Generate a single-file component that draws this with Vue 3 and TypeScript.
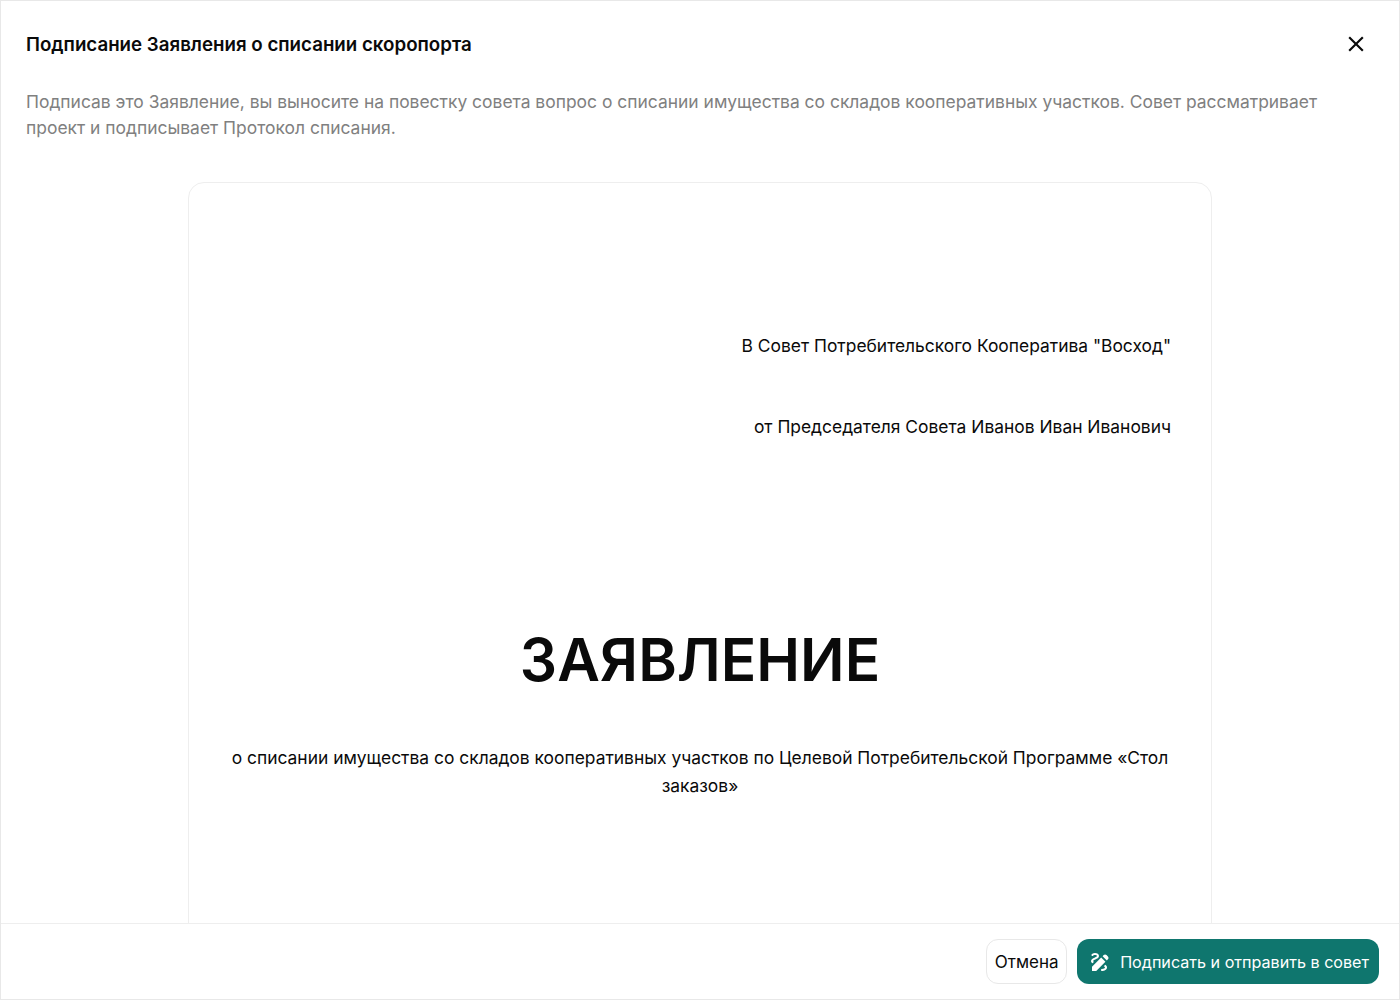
<script setup lang="ts">
const title = 'Подписание Заявления о списании скоропорта'
const intro = 'Подписав это Заявление, вы выносите на повестку совета вопрос о списании имущества со складов кооперативных участков. Совет рассматривает проект и подписывает Протокол списания.'
</script>

<template>
  <div class="dialog">
    <header class="head">
      <h1 class="title">{{ title }}</h1>
      <button class="close" aria-label="Закрыть">
        <svg width="26" height="26" viewBox="0 0 24 24" fill="#0a0a0a">
          <path d="M19 6.41 17.59 5 12 10.59 6.41 5 5 6.41 10.59 12 5 17.59 6.41 19 12 13.41 17.59 19 19 17.59 13.41 12z" />
        </svg>
      </button>
    </header>
    <main class="body">
      <p class="intro">{{ intro }}</p>
      <article class="paper">
        <p class="to">В Совет Потребительского Кооператива "Восход"</p>
        <p class="from">от Председателя Совета Иванов Иван Иванович</p>
        <h2 class="doc-title">ЗАЯВЛЕНИЕ</h2>
        <p class="subject">о списании имущества со складов кооперативных участков по Целевой Потребительской Программе «Стол заказов»</p>
      </article>
    </main>
    <footer class="foot">
      <button class="btn cancel">Отмена</button>
      <button class="btn primary">
        <svg width="24" height="24" viewBox="0 0 24 24" fill="#fff">
          <path d="M18.85 10.39l1.06-1.06c.78-.78.78-2.05 0-2.83L18.5 5.09c-.78-.78-2.05-.78-2.83 0l-1.06 1.06L18.85 10.39zM13.19 7.56 4 16.76V21h4.24l9.19-9.19L13.19 7.56zM19 17.5c0 2.19-2.54 3.5-5 3.5-.55 0-1-.45-1-1s.45-1 1-1c1.54 0 3-.73 3-1.5 0-.47-.48-.87-1.23-1.2l1.48-1.48C18.32 15.45 19 16.29 19 17.5zM4.58 13.35C3.61 12.79 3 12.06 3 11c0-1.8 1.89-2.63 3.56-3.36C7.59 7.18 9 6.56 9 6c0-.41-.78-1-2-1-1.26 0-1.8.61-1.83.64-.35.41-.98.46-1.4.12-.41-.34-.49-.95-.15-1.38C3.73 4.24 4.76 3 7 3c2.24 0 4 1.32 4 3 0 1.87-1.93 2.72-3.64 3.47C6.42 9.88 5 10.5 5 11c0 .31.43.6 1.07.86L4.58 13.35z" />
        </svg>
        <span>Подписать и отправить в совет</span>
      </button>
    </footer>
  </div>
</template>

<style>
html, body { margin: 0; background: #fff; }
</style>

<style scoped>
.dialog {
  box-sizing: border-box;
  width: 1400px;
  height: 1000px;
  border: 1px solid #e8e8e8;
  display: flex;
  flex-direction: column;
  background: #fff;
  font-family: Inter, "Liberation Sans", sans-serif;
  color: #0a0a0a;
  overflow: hidden;
}
.head {
  display: flex;
  align-items: center;
  justify-content: space-between;
  padding: 24px 30px 0 25px;
  height: 40px;
}
.title {
  margin: 0;
  font-size: 18.72px;
  line-height: 40px;
  font-weight: 600;
}
.close {
  border: 0;
  background: none;
  padding: 0;
  width: 26px;
  height: 26px;
  cursor: pointer;
  display: flex;
  margin-top: -3px;
}
.body {
  flex: 1;
  min-height: 0;
  overflow: hidden;
  padding: 24px 25px 0;
}
.intro {
  margin: 0 0 41px;
  font-size: 17.45px;
  line-height: 26px;
  color: #808080;
}
.paper {
  box-sizing: border-box;
  width: 1024px;
  margin: 0 auto;
  min-height: 900px;
  border: 1px solid #eee;
  border-radius: 16px;
  padding: 149px 40px 0;
  font-size: 17.42px;
  line-height: 28px;
}
.paper p { margin: 0; }
.to, .from { text-align: right; }
.from { margin-top: 53px !important; }
.doc-title {
  margin: 183px 0 0;
  text-align: center;
  font-size: 58.7px;
  line-height: 72px;
  font-weight: 600;
}
.subject { margin-top: 48px !important; text-align: center; }
.foot {
  height: 76px;
  box-sizing: border-box;
  border-top: 1px solid #eee;
  display: flex;
  justify-content: flex-end;
  align-items: center;
  gap: 10px;
  padding: 0 20px 0 0;
}
.btn {
  height: 45px;
  box-sizing: border-box;
  border-radius: 12px;
  font-family: inherit;
  cursor: pointer;
  display: flex;
  align-items: center;
}
.cancel {
  background: #fff;
  border: 1px solid #e8e8e8;
  color: #0a0a0a;
  padding: 0 8px;
  font-size: 17px;
  width: 81px;
  justify-content: center;
}
.primary {
  background: #0f766e;
  border: 0;
  color: #fff;
  padding: 0 10px 0 11px;
  gap: 8px;
  font-size: 16.13px;
}
</style>
